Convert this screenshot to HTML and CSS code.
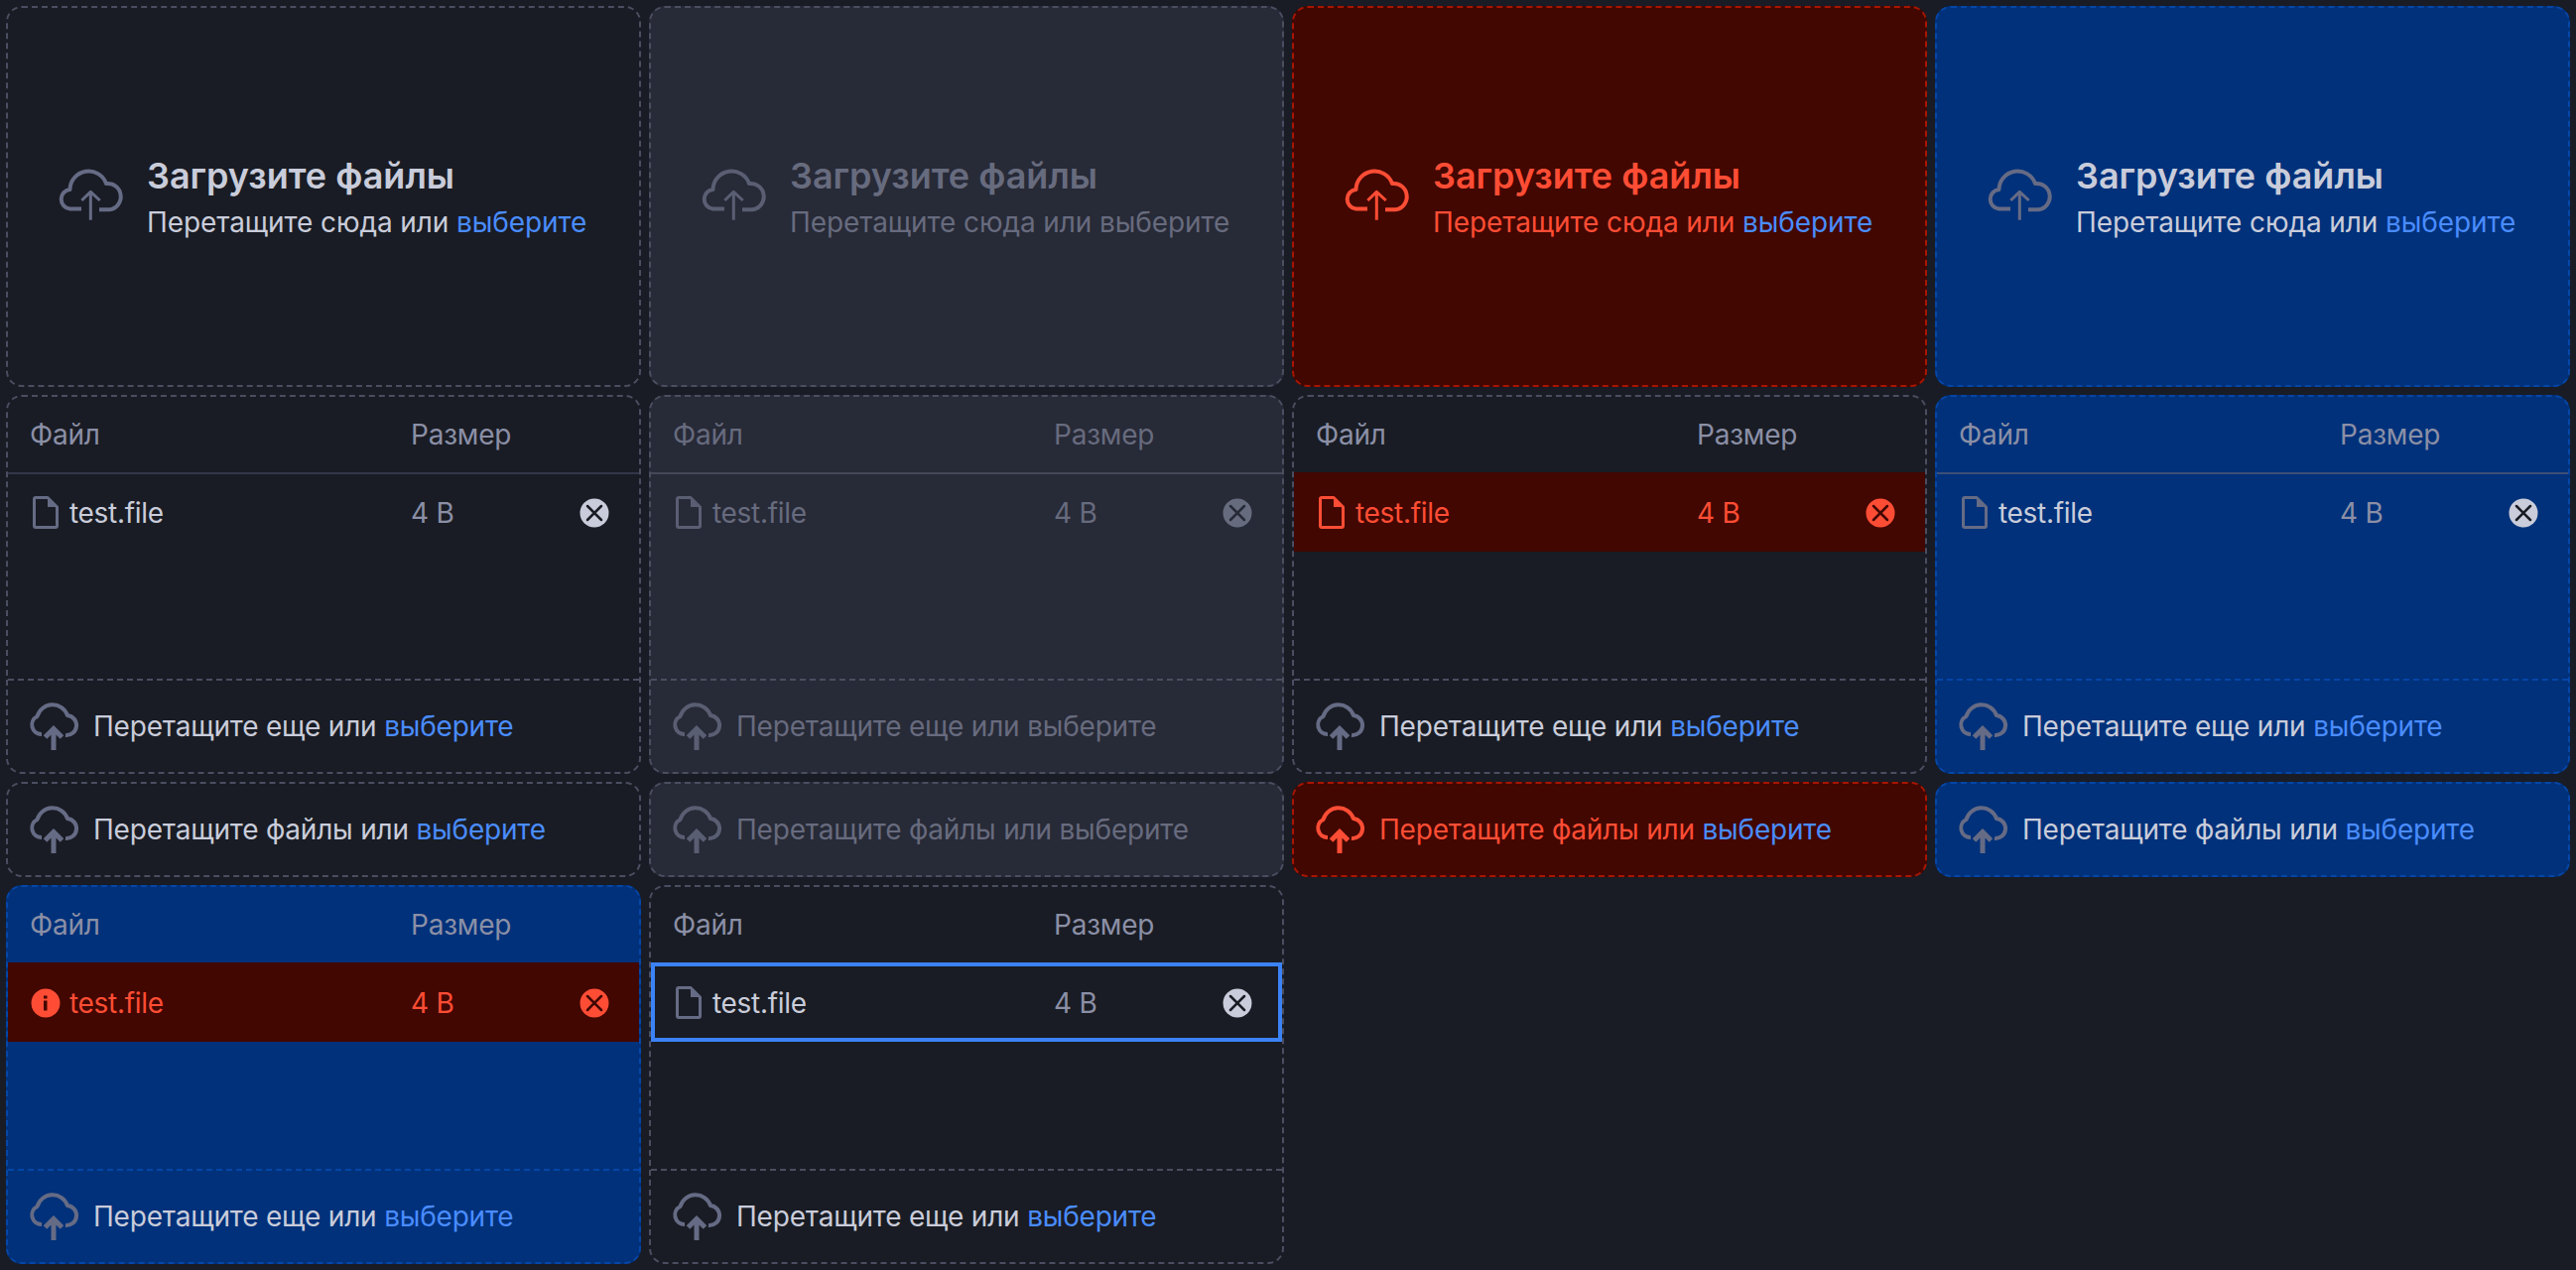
FILE: index.html
```html
<!DOCTYPE html>
<html lang="ru">
<head>
<meta charset="utf-8">
<title>Загрузка файлов</title>
<link rel="stylesheet" href="styles.css">
</head>
<body>
<svg class="sprite" aria-hidden="true">
  <symbol id="cloud-lg" viewBox="0 0 80 80"><path class="line-lg" d="M30 54.5H18.5A9.8 9.8 0 0 1 18.5 35A18.8 18.8 0 0 1 55 29A13.2 13.2 0 0 1 58 55.3H48"/><path class="line-md" d="M39.3 37.5V65.7M30.3 46L39.3 37.3L48.7 46"/></symbol>
  <symbol id="cloud-sm" viewBox="0 0 56 56"><path class="line-lg" d="M18 34A9.5 9.5 0 0 1 13.5 16A16 16 0 0 1 44 15A10 10 0 0 1 42 35"/><path class="line-bold" d="M30 29V50M21.5 37L30 28.5L38.5 37"/></symbol>
  <symbol id="file" viewBox="0 0 40 40"><path class="line-file" d="M10 4.5H22L31.5 14V33A1.5 1.5 0 0 1 30 34.5H10A1.5 1.5 0 0 1 8.500 33V6A1.500 1.500 0 0 1 10 4.500Z"/><path class="fold" d="M22 4.500V14H31.500Z"/></symbol>
  <symbol id="close" viewBox="0 0 32 32"><circle class="disc" cx="16" cy="16" r="14.500"/><path class="cross" d="M9 9L23 23M23 9L9 23"/></symbol>
  <symbol id="info" viewBox="0 0 40 40"><circle class="disc" cx="20" cy="20" r="14.500"/><path class="info-mark" d="M18 17.500H21.500V27.500H18ZM18 12.500H21.500V15.500H18Z"/></symbol>
</svg>

<main class="board">
  <section class="card drop-lg"><svg class="ic-cloud-lg"><use href="#cloud-lg"/></svg><div class="drop-text"><div class="drop-title">Загрузите файлы</div><div class="txt">Перетащите сюда или <a class="link">выберите</a></div></div></section>
  <section class="card drop-lg disabled"><svg class="ic-cloud-lg"><use href="#cloud-lg"/></svg><div class="drop-text"><div class="drop-title">Загрузите файлы</div><div class="txt">Перетащите сюда или <a class="link">выберите</a></div></div></section>
  <section class="card drop-lg error"><svg class="ic-cloud-lg"><use href="#cloud-lg"/></svg><div class="drop-text"><div class="drop-title">Загрузите файлы</div><div class="txt">Перетащите сюда или <a class="link">выберите</a></div></div></section>
  <section class="card drop-lg active"><svg class="ic-cloud-lg"><use href="#cloud-lg"/></svg><div class="drop-text"><div class="drop-title">Загрузите файлы</div><div class="txt">Перетащите сюда или <a class="link">выберите</a></div></div></section>

  <section class="card list">
    <div class="thead"><span>Файл</span><span>Размер</span></div>
    <div class="tbody"><div class="row"><div class="name"><svg class="ic-file"><use href="#file"/></svg><span>test.file</span></div><span class="size">4 B</span><svg class="ic-close"><use href="#close"/></svg></div></div>
    <div class="more"><svg class="ic-cloud-sm"><use href="#cloud-sm"/></svg><span class="txt">Перетащите еще или <a class="link">выберите</a></span></div>
  </section>
  <section class="card list disabled">
    <div class="thead"><span>Файл</span><span>Размер</span></div>
    <div class="tbody"><div class="row"><div class="name"><svg class="ic-file"><use href="#file"/></svg><span>test.file</span></div><span class="size">4 B</span><svg class="ic-close"><use href="#close"/></svg></div></div>
    <div class="more"><svg class="ic-cloud-sm"><use href="#cloud-sm"/></svg><span class="txt">Перетащите еще или <a class="link">выберите</a></span></div>
  </section>
  <section class="card list">
    <div class="thead"><span>Файл</span><span>Размер</span></div>
    <div class="tbody"><div class="row row-error"><div class="name"><svg class="ic-file"><use href="#file"/></svg><span>test.file</span></div><span class="size">4 B</span><svg class="ic-close"><use href="#close"/></svg></div></div>
    <div class="more"><svg class="ic-cloud-sm"><use href="#cloud-sm"/></svg><span class="txt">Перетащите еще или <a class="link">выберите</a></span></div>
  </section>
  <section class="card list active">
    <div class="thead"><span>Файл</span><span>Размер</span></div>
    <div class="tbody"><div class="row"><div class="name"><svg class="ic-file"><use href="#file"/></svg><span>test.file</span></div><span class="size">4 B</span><svg class="ic-close"><use href="#close"/></svg></div></div>
    <div class="more"><svg class="ic-cloud-sm"><use href="#cloud-sm"/></svg><span class="txt">Перетащите еще или <a class="link">выберите</a></span></div>
  </section>

  <section class="card drop-sm"><svg class="ic-cloud-sm"><use href="#cloud-sm"/></svg><span class="txt">Перетащите файлы или <a class="link">выберите</a></span></section>
  <section class="card drop-sm disabled"><svg class="ic-cloud-sm"><use href="#cloud-sm"/></svg><span class="txt">Перетащите файлы или <a class="link">выберите</a></span></section>
  <section class="card drop-sm error"><svg class="ic-cloud-sm"><use href="#cloud-sm"/></svg><span class="txt">Перетащите файлы или <a class="link">выберите</a></span></section>
  <section class="card drop-sm active"><svg class="ic-cloud-sm"><use href="#cloud-sm"/></svg><span class="txt">Перетащите файлы или <a class="link">выберите</a></span></section>

  <section class="card list active">
    <div class="thead"><span>Файл</span><span>Размер</span></div>
    <div class="tbody"><div class="row row-error"><div class="name"><svg class="ic-file"><use href="#info"/></svg><span>test.file</span></div><span class="size">4 B</span><svg class="ic-close"><use href="#close"/></svg></div></div>
    <div class="more"><svg class="ic-cloud-sm"><use href="#cloud-sm"/></svg><span class="txt">Перетащите еще или <a class="link">выберите</a></span></div>
  </section>
  <section class="card list">
    <div class="thead"><span>Файл</span><span>Размер</span></div>
    <div class="tbody"><div class="row row-focus"><div class="name"><svg class="ic-file"><use href="#file"/></svg><span>test.file</span></div><span class="size">4 B</span><svg class="ic-close"><use href="#close"/></svg></div></div>
    <div class="more"><svg class="ic-cloud-sm"><use href="#cloud-sm"/></svg><span class="txt">Перетащите еще или <a class="link">выберите</a></span></div>
  </section>
</main>
</body>
</html>
```
FILE: styles.css
```css
* { box-sizing: border-box; }
html, body { margin: 0; height: 100%; background: #191c24; }
body {
  font-family: Inter, "Noto Sans", sans-serif;
  font-size: 28px;
  line-height: 40px;
  letter-spacing: -0.2px;
  color: #c9ccda;
  overflow: hidden;
}
.sprite { display: none; }

.board {
  display: grid;
  grid-template-columns: repeat(4, 640px);
  grid-template-rows: 384px 382px 96px 382px;
  gap: 8px;
  padding: 6px;
}

.card {
  --text: #c9ccda;
  --muted: #8b8fa6;
  --icon: #666b85;
  --disc: #c9ccda;
  --mark: #191c24;
  --link: #4a8cff;
  --divider: #33364a;
  --dash: #4a4e60;
  background: #191c24;
  border: 2px dashed var(--dash);
  border-radius: 16px;
  color: var(--text);
  overflow: hidden;
}
.card.disabled {
  --text: #676b7e;
  --muted: #676b7e;
  --icon: #5a5e72;
  --disc: #676b7e;
  --mark: #272a37;
  --link: #676b7e;
  --divider: #454859;
  background: #272a37;
}
.card.error {
  --text: #ff4d35;
  --icon: #ff4d35;
  --dash: #a81500;
  background: #420700;
}
.card.active {
  --dash: #0546a8;
  --divider: #3e4f78;
  background: #00317a;
}
.card.active .more { border-top-color: #0546a8; }

.txt { color: var(--text); }
.link { color: var(--link); }

.drop-lg { display: flex; align-items: center; padding-left: 44px; }
.ic-cloud-lg { width: 80px; height: 80px; color: var(--icon); margin: -4px 16px 0 0; flex: none; }
.drop-title { font-size: 36px; font-weight: 600; line-height: 48px; letter-spacing: 0; }
.drop-text { display: flex; flex-direction: column; gap: 3px; letter-spacing: -0.1px; }

.drop-sm, .more { display: flex; align-items: center; padding-left: 16px; gap: 14px; }
.ic-cloud-sm { width: 56px; height: 56px; color: var(--icon); flex: none; margin-top: 4px; }

.list { display: flex; flex-direction: column; }
.thead {
  height: 76px;
  display: grid;
  grid-template-columns: 384px 1fr;
  align-items: center;
  padding-left: 22px;
  color: var(--muted);
}
.tbody { flex: 1; }
.row {
  height: 80px;
  display: grid;
  grid-template-columns: 388px 1fr 32px;
  align-items: center;
  padding: 0 29px 0 18px;
  border-top: 2px solid var(--divider);
}
.name { display: flex; align-items: center; gap: 4px; letter-spacing: -0.3px; }
.size { color: var(--muted); }
.ic-file { width: 40px; height: 40px; color: var(--icon); flex: none; }
.ic-close { width: 32px; height: 32px; color: var(--disc); }
.more { height: 94px; border-top: 2px dashed var(--dash); }

.row-error {
  --text: #ff4d35;
  --muted: #ff4d35;
  --icon: #ff4d35;
  --disc: #ff4d35;
  --mark: #420700;
  background: #420700;
  border-top-color: #420700;
  color: #ff4d35;
}
.row-focus { outline: 4px solid #3b82f6; outline-offset: -4px; border-top: 0; padding-top: 2px; }

.line-lg, .line-md, .line-bold, .line-file, .cross {
  fill: none;
  stroke: currentColor;
  stroke-linecap: round;
  stroke-linejoin: round;
}
.line-lg { stroke-width: 4; stroke-linecap: butt; }
.line-md { stroke-width: 3; stroke-linecap: butt; }
.line-bold { stroke-width: 5; stroke-linecap: butt; stroke-linejoin: miter; }
.line-file { stroke-width: 3; }
.ic-cloud-sm .line-lg { stroke-width: 4.500; }
.fold { fill: currentColor; }
.disc { fill: currentColor; }
.cross { stroke: var(--mark); stroke-width: 2.500; }
.info-mark { fill: var(--mark); }
```
